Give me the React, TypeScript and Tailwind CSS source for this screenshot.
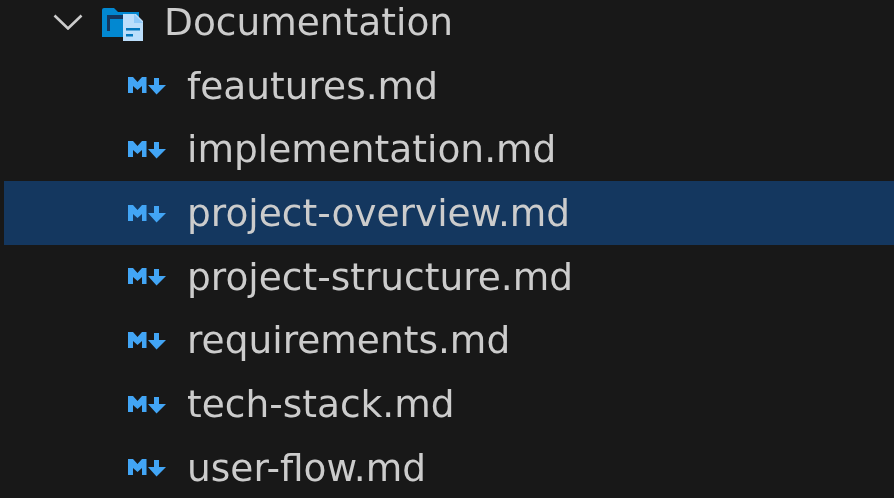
import React from "react";

const files = [
  "feautures.md",
  "implementation.md",
  "project-overview.md",
  "project-structure.md",
  "requirements.md",
  "tech-stack.md",
  "user-flow.md",
];

function MdIcon() {
  return (
    <svg width="40" height="20" viewBox="0 0 40 20" className="shrink-0 mt-[1px]">
      <path d="M1 1h5l4.500 5L15 1h4.500v16H15V10l-4.500 4L6 10v7H1z" fill="#42a5f5" />
      <path d="M27 2h5v7h7l-9.500 9.500L21 9h6z" fill="#42a5f5" />
    </svg>
  );
}

function FolderIcon() {
  return (
    <svg width="42" height="34" viewBox="0 0 42 34" className="shrink-0 mt-[5px]">
      <path d="M0 2a2 2 0 0 1 2-2h10l4 4h21v5H24v20H0z" fill="#0288d1" />
      <path d="M5 7h16v4H8v12H5z" fill="#14375f" />
      <path d="M21 6h13l7 7v20H21z" fill="#bbdefb" />
      <path d="M32 6l9 9h-9z" fill="#90caf9" />
      <path d="M24 20h14v2.500H24zM24 26h7v2.500h-7z" fill="#0277bd" />
    </svg>
  );
}

export default function App() {
  return (
    <div className="w-[894px] h-[498px] overflow-hidden bg-[#181818] font-['DejaVu_Sans',sans-serif] text-[#cccccc] text-[37.500px]">
      <div className="blur-[0.7px]">
        <div className="h-[54px] pb-[10px] flex items-center pl-[53px]">
          <svg width="30" height="16" viewBox="0 0 30 16" fill="none" className="shrink-0 mr-[19px]">
            <path d="M1.500 1.500L15 14.500L28.500 1.500" stroke="#cccccc" strokeWidth="2.600" />
          </svg>
          <FolderIcon />
          <span className="ml-[20px]">Documentation</span>
        </div>
        {files.map((name) => (
          <div
            key={name}
            className={`h-[63.7px] flex items-center pl-[123px] ml-[4px] ${name === "project-overview.md" ? "bg-[#14375f]" : ""}`}
          >
            <MdIcon />
            <span className="ml-[20px]">{name}</span>
          </div>
        ))}
      </div>
    </div>
  );
}
